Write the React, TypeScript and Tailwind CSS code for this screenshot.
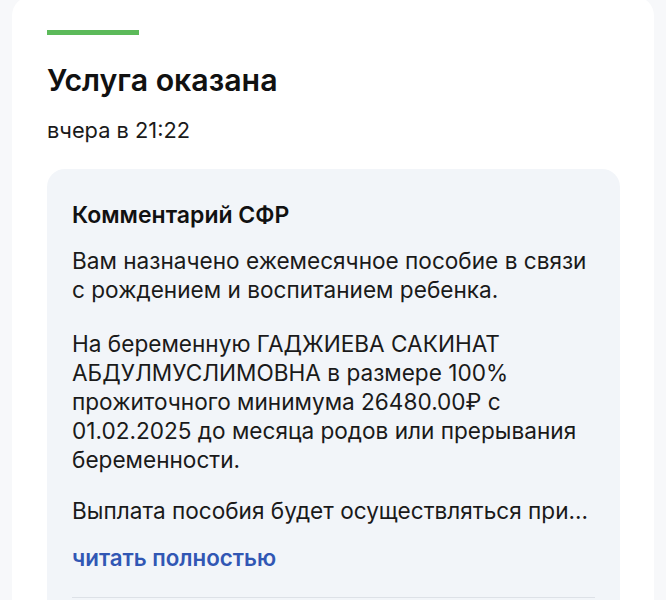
export default function App() {
  return (
    <div
      className="min-h-screen bg-[#f7f8fa] px-3"
      style={{ fontFamily: "Inter, 'Noto Sans', sans-serif" }}
    >
      <div className="-mt-1 rounded-[20px] bg-white pl-[35px] pr-[34px] pt-[34px] pb-10">
        <div className="h-[5px] w-[92px] bg-[#5cba5a]" />
        <h1 className="mt-[27px] text-[30.3px] leading-[36px] font-semibold text-[#111]">
          Услуга оказана
        </h1>
        <p className="mt-[20px] text-[21.8px] leading-[24px] text-[#1a1a1a]">вчера в 21:22</p>

        <div className="mt-[27px] rounded-[18px] bg-[#f2f5f9] px-[25px] pt-[33px] pb-6">
          <h2 className="text-[23px] leading-[26px] font-semibold text-[#111]">
            Комментарий СФР
          </h2>
          <div className="mt-[18px] text-[22.6px] leading-[29px] text-[#1a1a1a]">
            <p>
              Вам назначено ежемесячное пособие в связи
              <br />с рождением и воспитанием ребенка.
            </p>
            <p className="mt-[25px]">
              На беременную ГАДЖИЕВА САКИНАТ
              <br />
              АБДУЛМУСЛИМОВНА в размере 100%
              <br />
              прожиточного минимума 26480.00₽ с
              <br />
              01.02.2025 до месяца родов или прерывания
              <br />
              беременности.
            </p>
            <p className="mt-[22px] whitespace-nowrap">Выплата пособия будет осуществляться при...</p>
          </div>
          <button className="mt-[20px] text-[22.3px] leading-[26px] font-semibold text-[#3157b4]">
            читать полностью
          </button>
          <div className="mt-[25px] h-px bg-[#dde1e7]" />
        </div>
      </div>
    </div>
  );
}
